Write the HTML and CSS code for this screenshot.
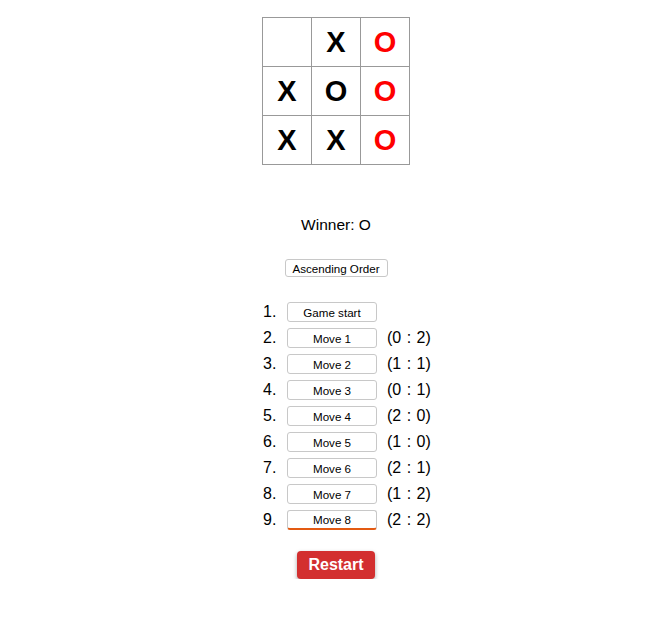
FILE: index.html
```html
<!DOCTYPE html>
<html>
<head>
<meta charset="utf-8">
<link rel="stylesheet" href="styles.css">
</head>
<body>
<div class="game">
  <div class="board">
    <button class="square"></button>
    <button class="square">X</button>
    <button class="square win">O</button>
    <button class="square">X</button>
    <button class="square">O</button>
    <button class="square win">O</button>
    <button class="square">X</button>
    <button class="square">X</button>
    <button class="square win">O</button>
  </div>
  <div class="status">Winner: O</div>
  <button class="btn order">Ascending Order</button>
  <ol class="moves">
    <li class="move"><span class="num">1.</span><button class="btn jump">Game start</button></li>
    <li class="move"><span class="num">2.</span><button class="btn jump">Move 1</button><span class="loc">(0 : 2)</span></li>
    <li class="move"><span class="num">3.</span><button class="btn jump">Move 2</button><span class="loc">(1 : 1)</span></li>
    <li class="move"><span class="num">4.</span><button class="btn jump">Move 3</button><span class="loc">(0 : 1)</span></li>
    <li class="move"><span class="num">5.</span><button class="btn jump">Move 4</button><span class="loc">(2 : 0)</span></li>
    <li class="move"><span class="num">6.</span><button class="btn jump">Move 5</button><span class="loc">(1 : 0)</span></li>
    <li class="move"><span class="num">7.</span><button class="btn jump">Move 6</button><span class="loc">(2 : 1)</span></li>
    <li class="move"><span class="num">8.</span><button class="btn jump">Move 7</button><span class="loc">(1 : 2)</span></li>
    <li class="move"><span class="num">9.</span><button class="btn jump current">Move 8</button><span class="loc">(2 : 2)</span></li>
  </ol>
  <button class="restart">Restart</button>
</div>
</body>
</html>
```
FILE: styles.css
```css
html, body {
  margin: 0;
  padding: 0;
  background: #fff;
}
body {
  padding: 8px 0 0 8px;
  font-family: "Liberation Sans", Arial, sans-serif;
  color: #000;
}
.game {
  display: flex;
  flex-direction: column;
  align-items: center;
}
.board {
  margin-top: 9px;
  display: grid;
  grid-template-columns: repeat(3, 49px);
  grid-template-rows: repeat(3, 49px);
  border-top: 1px solid #999;
  border-left: 1px solid #999;
}
.square {
  box-sizing: border-box;
  width: 49px;
  height: 49px;
  margin: 0;
  padding: 0;
  background: #fff;
  border: none;
  border-right: 1px solid #999;
  border-bottom: 1px solid #999;
  font-family: "Liberation Sans", Arial, sans-serif;
  font-weight: bold;
  font-size: 29px;
  line-height: 48px;
  color: #000;
}
.square.win {
  color: #ff0000;
}
.status {
  margin-top: 51px;
  font-size: 15.5px;
  line-height: 18px;
}
.btn {
  box-sizing: border-box;
  margin: 0;
  background: #fff;
  border: 1px solid #c8c8c8;
  border-radius: 3px;
  font-family: "Liberation Sans", Arial, sans-serif;
  font-size: 11.6px;
  color: #000;
  padding: 0;
}
.order {
  margin-top: 25px;
  height: 18px;
  width: 103px;
}
.moves {
  list-style: none;
  margin: 22px 0 0 24px;
  padding: 0;
  width: 170px;
}
.move {
  display: flex;
  align-items: center;
  height: 26px;
  font-size: 16px;
}
.num {
  width: 24px;
}
.jump {
  width: 90px;
  height: 20px;
}
.jump.current {
  border-bottom: 2px solid #e35a12;
}
.loc {
  margin-left: 10px;
  font-size: 16px;
  word-spacing: 1px;
}
.restart {
  margin-top: 18px;
  width: 78px;
  height: 28px;
  background: #d32f2f;
  color: #fff;
  border: none;
  border-radius: 4px;
  font-family: "Liberation Sans", Arial, sans-serif;
  font-weight: bold;
  font-size: 16px;
  box-shadow: 0 2px 4px rgba(0, 0, 0, 0.35);
  padding: 0;
}
```
